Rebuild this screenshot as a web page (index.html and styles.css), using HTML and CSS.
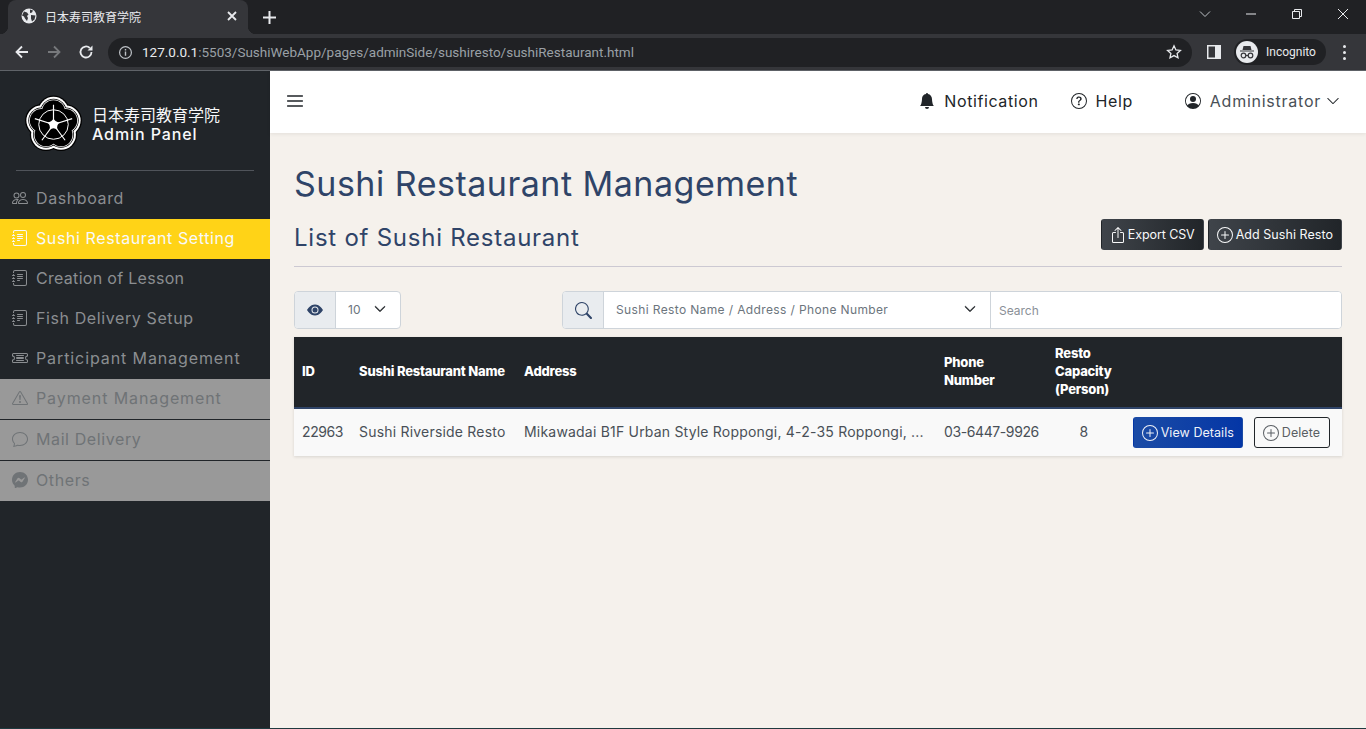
FILE: index.html
```html
<!DOCTYPE html>
<html lang="ja">
<head>
    <meta charset="UTF-8">
    <title>日本寿司教育学院</title>
    <link rel="stylesheet" href="styles.css">
</head>
<body>
    <svg class="icon-defs" xmlns="http://www.w3.org/2000/svg">
        <symbol id="i-people" viewBox="0 0 16 16"><path d="M15 14s1 0 1-1-1-4-5-4-5 3-5 4 1 1 1 1h8zm-7.978-1A.261.261 0 0 1 7 12.996c.001-.264.167-1.03.76-1.72C8.312 10.629 9.282 10 11 10c1.717 0 2.687.63 3.24 1.276.593.69.758 1.457.76 1.72l-.008.002a.274.274 0 0 1-.014.002H7.022zM11 7a2 2 0 1 0 0-4 2 2 0 0 0 0 4zm3-2a3 3 0 1 1-6 0 3 3 0 0 1 6 0zM6.936 9.28a5.88 5.88 0 0 0-1.23-.247A7.35 7.35 0 0 0 5 9c-4 0-5 3-5 4 0 .667.333 1 1 1h4.216A2.238 2.238 0 0 1 5 13c0-1.01.377-2.042 1.09-2.904.243-.294.526-.569.846-.816zM4.92 10A5.493 5.493 0 0 0 4 13H1c0-.26.164-1.03.76-1.724.545-.636 1.492-1.256 3.16-1.275zM1.5 5.5a3 3 0 1 1 6 0 3 3 0 0 1-6 0zm3-2a2 2 0 1 0 0 4 2 2 0 0 0 0-4z"/></symbol>
        <symbol id="i-journal" viewBox="0 0 16 16"><path d="M5 10.5a.5.5 0 0 1 .5-.5h2a.5.5 0 0 1 0 1h-2a.5.5 0 0 1-.5-.5zm0-2a.5.5 0 0 1 .5-.5h5a.5.5 0 0 1 0 1h-5a.5.5 0 0 1-.5-.5zm0-2a.5.5 0 0 1 .5-.5h5a.5.5 0 0 1 0 1h-5a.5.5 0 0 1-.5-.5zm0-2a.5.5 0 0 1 .5-.5h5a.5.5 0 0 1 0 1h-5a.5.5 0 0 1-.5-.5z"/><path d="M3 0h10a2 2 0 0 1 2 2v12a2 2 0 0 1-2 2H3a2 2 0 0 1-2-2v-1h1v1a1 1 0 0 0 1 1h10a1 1 0 0 0 1-1V2a1 1 0 0 0-1-1H3a1 1 0 0 0-1 1v1H1V2a2 2 0 0 1 2-2z"/><path d="M1 5v-.5a.5.5 0 0 1 1 0V5h.5a.5.5 0 0 1 0 1h-2a.5.5 0 0 1 0-1H1zm0 3v-.5a.5.5 0 0 1 1 0V8h.5a.5.5 0 0 1 0 1h-2a.5.5 0 0 1 0-1H1zm0 3v-.5a.5.5 0 0 1 1 0v.5h.5a.5.5 0 0 1 0 1h-2a.5.5 0 0 1 0-1H1z"/></symbol>
        <symbol id="i-ticket" viewBox="0 0 16 16"><path d="M4 5.5a.5.5 0 0 1 .5-.5h7a.5.5 0 0 1 0 1h-7a.5.5 0 0 1-.5-.5Zm0 5a.5.5 0 0 1 .5-.5h7a.5.5 0 0 1 0 1h-7a.5.5 0 0 1-.5-.5ZM5 7a1 1 0 0 0 0 2h6a1 1 0 1 0 0-2H5Z"/><path d="M0 4.5A1.5 1.5 0 0 1 1.5 3h13A1.5 1.5 0 0 1 16 4.5V6a.5.5 0 0 1-.5.5 1.5 1.5 0 0 0 0 3 .5.5 0 0 1 .5.5v1.5a1.5 1.5 0 0 1-1.5 1.5h-13A1.5 1.5 0 0 1 0 11.5V10a.5.5 0 0 1 .5-.5 1.5 1.5 0 1 0 0-3A.5.5 0 0 1 0 6V4.5ZM1.5 4a.5.5 0 0 0-.5.5v1.05a2.5 2.5 0 0 1 0 4.9v1.05a.5.5 0 0 0 .5.5h13a.5.5 0 0 0 .5-.5v-1.05a2.5 2.5 0 0 1 0-4.9V4.5a.5.5 0 0 0-.5-.5h-13Z"/></symbol>
        <symbol id="i-warning" viewBox="0 0 16 16"><path d="M7.938 2.016A.13.13 0 0 1 8.002 2a.13.13 0 0 1 .063.016.146.146 0 0 1 .054.057l6.857 11.667c.036.06.035.124.002.183a.163.163 0 0 1-.054.06.116.116 0 0 1-.066.017H1.146a.115.115 0 0 1-.066-.017.163.163 0 0 1-.054-.06.176.176 0 0 1 .002-.183L7.884 2.073a.147.147 0 0 1 .054-.057zm1.044-.45a1.13 1.13 0 0 0-1.96 0L.165 13.233c-.457.778.091 1.767.98 1.767h13.713c.889 0 1.438-.99.98-1.767L8.982 1.566z"/><path d="M7.002 12a1 1 0 1 1 2 0 1 1 0 0 1-2 0zM7.1 5.995a.905.905 0 1 1 1.8 0l-.35 3.507a.552.552 0 0 1-1.1 0L7.1 5.995z"/></symbol>
        <symbol id="i-chat" viewBox="0 0 16 16"><path d="M2.678 11.894a1 1 0 0 1 .287.801 10.97 10.97 0 0 1-.398 2c1.395-.323 2.247-.697 2.634-.893a1 1 0 0 1 .71-.074A8.06 8.06 0 0 0 8 14c3.996 0 7-2.807 7-6 0-3.192-3.004-6-7-6S1 4.808 1 8c0 1.468.617 2.83 1.678 3.894zm-.493 3.905a21.682 21.682 0 0 1-.713.129c-.2.032-.352-.176-.273-.362a9.68 9.68 0 0 0 .244-.637l.003-.01c.248-.72.45-1.548.524-2.319C.743 11.37 0 9.76 0 8c0-3.866 3.582-7 8-7s8 3.134 8 7-3.582 7-8 7a9.06 9.06 0 0 1-2.347-.306c-.52.263-1.639.742-3.468 1.105z"/></symbol>
        <symbol id="i-messenger" viewBox="0 0 16 16"><path d="M0 7.76C0 3.301 3.493 0 8 0s8 3.301 8 7.76-3.493 7.76-8 7.76c-.81 0-1.586-.107-2.316-.307a.639.639 0 0 0-.427.03l-1.588.702a.64.64 0 0 1-.898-.566l-.044-1.423a.639.639 0 0 0-.215-.456C.956 12.108 0 10.092 0 7.76zm5.546-1.459-2.35 3.728c-.225.358.214.761.551.506l2.525-1.916a.48.48 0 0 1 .578-.002l1.869 1.402a1.2 1.2 0 0 0 1.735-.32l2.35-3.728c.226-.358-.214-.761-.551-.506L9.728 7.381a.48.48 0 0 1-.578.002L7.281 5.98a1.2 1.2 0 0 0-1.735.32z"/></symbol>
        <symbol id="i-plus" viewBox="0 0 16 16"><path d="M8 15A7 7 0 1 1 8 1a7 7 0 0 1 0 14zm0 1A8 8 0 1 0 8 0a8 8 0 0 0 0 16z"/><path d="M8 4a.5.5 0 0 1 .5.5v3h3a.5.5 0 0 1 0 1h-3v3a.5.5 0 0 1-1 0v-3h-3a.5.5 0 0 1 0-1h3v-3A.5.5 0 0 1 8 4z"/></symbol>
        <symbol id="i-export" viewBox="0 0 16 16"><path d="M3.500 6a.5.5 0 0 0-.5.5v8a.5.5 0 0 0 .5.5h9a.5.5 0 0 0 .5-.5v-8a.5.5 0 0 0-.5-.5h-2a.5.5 0 0 1 0-1h2A1.500 1.500 0 0 1 14 6.500v8a1.500 1.500 0 0 1-1.500 1.500h-9A1.500 1.500 0 0 1 2 14.500v-8A1.500 1.500 0 0 1 3.500 5h2a.5.5 0 0 1 0 1h-2z"/><path d="M7.646.146a.5.5 0 0 1 .708 0l3 3a.5.5 0 0 1-.708.708L8.500 1.707V10.500a.5.5 0 0 1-1 0V1.707L5.354 3.854a.5.5 0 1 1-.708-.708l3-3z"/></symbol>
        <symbol id="i-chevron" viewBox="0 0 16 16"><path fill-rule="evenodd" d="M1.646 4.646a.5.5 0 0 1 .708 0L8 10.293l5.646-5.647a.5.5 0 0 1 .708.708l-6 6a.5.5 0 0 1-.708 0l-6-6a.5.5 0 0 1 0-.708z"/></symbol>
        <!-- five overlapping lobes of the logo, drawn again at each layer with a different radius -->
        <symbol id="i-lobes-17" viewBox="0 0 60 60"><circle cx="30" cy="17" r="16.500"/><circle cx="42.400" cy="26" r="16.500"/><circle cx="37.600" cy="40.500" r="16.500"/><circle cx="22.400" cy="40.500" r="16.500"/><circle cx="17.600" cy="26" r="16.500"/></symbol>
        <symbol id="i-lobes-15" viewBox="0 0 60 60"><circle cx="30" cy="17" r="15.200"/><circle cx="42.400" cy="26" r="15.200"/><circle cx="37.600" cy="40.500" r="15.200"/><circle cx="22.400" cy="40.500" r="15.200"/><circle cx="17.600" cy="26" r="15.200"/></symbol>
        <symbol id="i-lobes-13" viewBox="0 0 60 60"><circle cx="30" cy="17" r="13.200"/><circle cx="42.400" cy="26" r="13.200"/><circle cx="37.600" cy="40.500" r="13.200"/><circle cx="22.400" cy="40.500" r="13.200"/><circle cx="17.600" cy="26" r="13.200"/></symbol>
        <symbol id="i-lobes-12" viewBox="0 0 60 60"><circle cx="30" cy="17" r="12.500"/><circle cx="42.400" cy="26" r="12.500"/><circle cx="37.600" cy="40.500" r="12.500"/><circle cx="22.400" cy="40.500" r="12.500"/><circle cx="17.600" cy="26" r="12.500"/></symbol>
        <symbol id="i-lobes-11" viewBox="0 0 60 60"><circle cx="30" cy="17" r="11.700"/><circle cx="42.400" cy="26" r="11.700"/><circle cx="37.600" cy="40.500" r="11.700"/><circle cx="22.400" cy="40.500" r="11.700"/><circle cx="17.600" cy="26" r="11.700"/></symbol>
    </svg>

    <!-- browser window top -->
    <div class="tabstrip">
        <div class="tab">
            <svg class="favicon" viewBox="0 0 16 16"><circle cx="8" cy="8" r="7.5" fill="#e8eaed"/><path d="M3 3.500l3 1 1.500 2-1.500 1.500 1 2-1 3-2-2.500-1-2-2-1zM9 1.500l3 1-1 2-2 .5zM10 7l4.500 .5-1 4-2.500 2-1-3z" fill="#35363a"/></svg>
            <span class="tab-title">日本寿司教育学院</span>
            <svg class="tab-close" viewBox="0 0 10 10"><path d="M1 1l8 8M9 1L1 9" stroke="#e8eaed" stroke-width="1.800"/></svg>
        </div>
        <svg class="new-tab" viewBox="0 0 13 13"><path d="M6.500 0v13M0 6.500h13" stroke="#e8eaed" stroke-width="2"/></svg>
        <div class="window-btns">
            <svg class="win-chevron" viewBox="0 0 12 8"><path d="M1 1.500l5 5 5-5" fill="none" stroke="#bdc1c6" stroke-width="1"/></svg>
            <svg class="win-btn" viewBox="0 0 12 12"><path d="M1 6h10" stroke="#e8eaed" stroke-width="1"/></svg>
            <svg class="win-btn" viewBox="0 0 12 12"><path d="M1.500 3.500h7v7h-7zM3.500 3.500v-2h7v7h-2" fill="none" stroke="#e8eaed" stroke-width="1"/></svg>
            <svg class="win-btn" viewBox="0 0 12 12"><path d="M1 1l10 10M11 1L1 11" stroke="#e8eaed" stroke-width="1"/></svg>
        </div>
    </div>
    <div class="toolbar">
        <svg class="nav-icon" viewBox="0 0 16 16"><path d="M14 8H3M8 2.500L2.500 8 8 13.500" fill="none" stroke="#e8eaed" stroke-width="1.800"/></svg>
        <svg class="nav-icon" viewBox="0 0 16 16"><path d="M2 8h11M8 2.500L13.500 8 8 13.500" fill="none" stroke="#77797c" stroke-width="1.800"/></svg>
        <svg class="nav-icon" viewBox="0 0 16 16"><path d="M13.500 8A5.500 5.500 0 1 1 11.800 4" fill="none" stroke="#e8eaed" stroke-width="1.800"/><path d="M9.500 6.500H14.500V1.500z" fill="#e8eaed"/></svg>
        <div class="omnibox">
            <svg class="info-icon" viewBox="0 0 16 16"><circle cx="8" cy="8" r="6.300" fill="none" stroke="#bdc1c6" stroke-width="1.300"/><path d="M8 7v4.500M8 4.300v1.500" stroke="#bdc1c6" stroke-width="1.500"/></svg>
            <span class="url"><b>127.0.0.1</b>:5503/SushiWebApp/pages/adminSide/sushiresto/sushiRestaurant.html</span>
            <svg class="star-icon" viewBox="0 0 16 16"><path d="M8 1.800l1.900 4.100 4.500.5-3.300 3 .9 4.400L8 11.600l-4 2.200.9-4.400-3.300-3 4.500-.5z" fill="none" stroke="#e8eaed" stroke-width="1.300"/></svg>
        </div>
        <svg class="side-icon" viewBox="0 0 14 14"><rect width="14" height="14" fill="#e8eaed"/><rect x="1.500" y="1.500" width="6.500" height="11" fill="#35363a"/></svg>
        <div class="incognito">
            <svg class="incognito-badge" viewBox="0 0 22 22"><circle cx="11" cy="11" r="11" fill="#e8eaed"/><path d="M7.500 5h7l1 4h-9zM4 9.500h14v1H4z" fill="#35363a"/><circle cx="7.500" cy="14.500" r="2.300" fill="none" stroke="#35363a" stroke-width="1.200"/><circle cx="14.500" cy="14.500" r="2.300" fill="none" stroke="#35363a" stroke-width="1.200"/><path d="M9.800 14.500h2.400" stroke="#35363a" stroke-width="1.200"/></svg>
            <span>Incognito</span>
        </div>
        <div class="kebab"><i></i><i></i><i></i></div>
    </div>

    <div class="app">
        <aside class="sidebar">
            <div class="brand">
                <svg class="brand-logo" viewBox="0 0 60 60">
                    <use href="#i-lobes-17" fill="#000"/>
                    <use href="#i-lobes-15" fill="#fff"/>
                    <use href="#i-lobes-13" fill="#000"/>
                    <use href="#i-lobes-12" fill="#fff"/>
                    <use href="#i-lobes-11" fill="#000"/>
                    <circle cx="30" cy="30" r="15" fill="none" stroke="#fff" stroke-width="1"/>
                    <path d="M30 30V10M30 30L49 24M30 30L41.800 46M30 30L18.200 46M30 30L11 24" stroke="#fff" stroke-width="1.200"/>
                    <path d="M30 23.500Q31 27.500 36.500 27.900 32.700 30.300 34 35.300 30 32.200 26 35.300 27.300 30.300 23.500 27.900 29 27.500 30 23.500z" fill="#fff"/>
                </svg>
                <div class="brand-text">
                    <div class="brand-jp">日本寿司教育学院</div>
                    <div class="brand-sub">Admin Panel</div>
                </div>
            </div>
            <hr class="brand-rule">
            <nav class="side-nav">
                <a class="side-link"><svg class="bi"><use href="#i-people"/></svg>Dashboard</a>
                <a class="side-link active"><svg class="bi"><use href="#i-journal"/></svg>Sushi Restaurant Setting</a>
                <a class="side-link tight"><svg class="bi"><use href="#i-journal"/></svg>Creation of Lesson</a>
                <a class="side-link"><svg class="bi"><use href="#i-journal"/></svg>Fish Delivery Setup</a>
                <a class="side-link wide"><svg class="bi"><use href="#i-ticket"/></svg>Participant Management</a>
                <a class="side-link disabled wide"><svg class="bi"><use href="#i-warning"/></svg>Payment Management</a>
                <a class="side-link disabled"><svg class="bi"><use href="#i-chat"/></svg>Mail Delivery</a>
                <a class="side-link disabled"><svg class="bi"><use href="#i-messenger"/></svg>Others</a>
            </nav>
        </aside>

        <div class="content">
            <header class="topbar">
                <svg class="menu-icon" viewBox="0 0 16 16"><path d="M1 3.500h14M1 8h14M1 12.500h14" stroke="#212529" stroke-width="1.300"/></svg>
                <div class="top-links">
                    <a class="top-link notif"><svg class="top-icon" viewBox="0 0 16 16"><path d="M8 16a2 2 0 0 0 2-2H6a2 2 0 0 0 2 2zm.995-14.901a1 1 0 1 0-1.990 0A5.002 5.002 0 0 0 3 6c0 1.098-.5 6-2 7h14c-1.500-1-2-5.902-2-7 0-2.420-1.720-4.440-4.005-4.901z"/></svg>Notification</a>
                    <a class="top-link help"><svg class="top-icon" viewBox="0 0 16 16"><path d="M8 15A7 7 0 1 1 8 1a7 7 0 0 1 0 14zm0 1A8 8 0 1 0 8 0a8 8 0 0 0 0 16z"/><path d="M5.255 5.786a.237.237 0 0 0 .241.247h.825c.138 0 .248-.113.266-.25.09-.656.54-1.134 1.342-1.134.686 0 1.314.343 1.314 1.168 0 .635-.374.927-.965 1.371-.673.489-1.206 1.060-1.168 1.987l.003.217a.25.25 0 0 0 .25.246h.811a.25.25 0 0 0 .25-.25v-.105c0-.718.273-.927 1.010-1.486.609-.463 1.244-.977 1.244-2.056 0-1.511-1.276-2.241-2.673-2.241-1.267 0-2.655.59-2.750 2.286zm1.557 5.763c0 .533.425.927 1.010.927.609 0 1.028-.394 1.028-.927 0-.552-.42-.94-1.029-.94-.584 0-1.009.388-1.009.94z"/></svg>Help</a>
                    <a class="top-link user"><svg class="top-icon" viewBox="0 0 16 16"><path d="M11 6a3 3 0 1 1-6 0 3 3 0 0 1 6 0z"/><path fill-rule="evenodd" d="M0 8a8 8 0 1 1 16 0A8 8 0 0 1 0 8zm8-7a7 7 0 0 0-5.468 11.370C3.242 11.226 4.805 10 8 10s4.757 1.225 5.468 2.370A7 7 0 0 0 8 1z"/></svg>Administrator<svg class="user-chevron"><use href="#i-chevron"/></svg></a>
                </div>
            </header>

            <main class="page">
                <h1 class="page-title">Sushi Restaurant Management</h1>
                <div class="section-head">
                    <h2 class="section-title">List of Sushi Restaurant</h2>
                    <div class="section-actions">
                        <button class="btn btn-dark btn-export"><svg class="bi"><use href="#i-export"/></svg>Export CSV</button>
                        <button class="btn btn-dark"><svg class="bi"><use href="#i-plus"/></svg>Add Sushi Resto</button>
                    </div>
                </div>

                <div class="filters">
                    <div class="input-group per-page">
                        <span class="addon"><svg class="eye-icon" viewBox="0 0 16 16"><path d="M10.500 8a2.500 2.500 0 1 1-5 0 2.500 2.500 0 0 1 5 0z"/><path d="M0 8s3-5.500 8-5.500S16 8 16 8s-3 5.500-8 5.500S0 8 0 8zm8 3.500a3.500 3.500 0 1 0 0-7 3.500 3.500 0 0 0 0 7z"/></svg></span>
                        <span class="select select-size">10<svg class="select-chevron"><use href="#i-chevron"/></svg></span>
                    </div>
                    <div class="input-group search-group">
                        <span class="addon"><svg class="search-icon" viewBox="0 0 16 16"><path d="M11.742 10.344a6.500 6.500 0 1 0-1.397 1.398h-.001c.03.04.062.078.098.115l3.850 3.850a1 1 0 0 0 1.415-1.414l-3.850-3.850a1.007 1.007 0 0 0-.115-.1zM12 6.500a5.500 5.500 0 1 1-11 0 5.500 5.500 0 0 1 11 0z"/></svg></span>
                        <span class="select select-field">Sushi Resto Name / Address / Phone Number<svg class="select-chevron"><use href="#i-chevron"/></svg></span>
                        <input class="search-input" type="text" placeholder="Search">
                    </div>
                </div>

                <table class="resto-table">
                    <colgroup>
                        <col class="col-id"><col class="col-name"><col class="col-address"><col class="col-phone"><col class="col-cap"><col>
                    </colgroup>
                    <thead>
                        <tr>
                            <th>ID</th>
                            <th>Sushi Restaurant Name</th>
                            <th>Address</th>
                            <th>Phone<br>Number</th>
                            <th>Resto Capacity (Person)</th>
                            <th></th>
                        </tr>
                    </thead>
                    <tbody>
                        <tr>
                            <td class="num">22963</td>
                            <td>Sushi Riverside Resto</td>
                            <td>Mikawadai B1F Urban Style Roppongi, 4-2-35 Roppongi, ...</td>
                            <td class="num">03-6447-9926</td>
                            <td class="capacity">8</td>
                            <td class="actions">
                                <button class="btn btn-blue"><svg class="bi"><use href="#i-plus"/></svg>View Details</button>
                                <button class="btn btn-outline"><svg class="bi"><use href="#i-plus"/></svg>Delete</button>
                            </td>
                        </tr>
                    </tbody>
                </table>
            </main>
        </div>
    </div>
    <div class="bottom-line"></div>
</body>
</html>
```

FILE: styles.css
```css
/* Base */
* {
    box-sizing: border-box;
}

html, body {
    margin: 0;
    height: 729px;
    overflow: hidden;
}

body {
    font-family: Inter, "Noto Sans CJK JP", sans-serif;
    background-color: #f5f1ec;
    color: #212529;
}

.icon-defs {
    display: none;
}

.bi {
    width: 16px;
    height: 16px;
    fill: currentColor;
    flex-shrink: 0;
}

/* Browser top */
.tabstrip {
    height: 34px;
    background-color: #202124;
    display: flex;
    align-items: flex-end;
    padding-left: 8px;
}

.tab {
    position: relative;
    width: 240px;
    height: 34px;
    background-color: #35363a;
    border-radius: 8px 8px 0 0;
    display: flex;
    align-items: center;
    padding: 0 11px 2px 13px;
    color: #e8eaed;
}

/* little flares at the foot of the tab */
.tab::before,
.tab::after {
    content: "";
    position: absolute;
    bottom: 0;
    width: 8px;
    height: 8px;
}

.tab::before {
    left: -8px;
    background-image: radial-gradient(circle at 0 0, #202124 8px, #35363a 8.5px);
}

.tab::after {
    right: -8px;
    background-image: radial-gradient(circle at 100% 0, #202124 8px, #35363a 8.5px);
}

.favicon {
    width: 16px;
    height: 16px;
    margin-right: 8px;
}

.tab-title {
    font-size: 12px;
    flex: 1;
    font-family: "Noto Sans CJK JP", sans-serif;
}

.tab-close {
    width: 10px;
    height: 10px;
}

.new-tab {
    width: 13px;
    height: 13px;
    margin: 0 0 10px 15px;
}

.window-btns {
    margin-left: auto;
    display: flex;
    align-items: center;
    align-self: flex-start;
    height: 28px;
}

.win-chevron {
    width: 12px;
    height: 8px;
    margin-right: 34px;
}

.win-btn {
    width: 12px;
    height: 12px;
    margin-right: 34px;
}

.window-btns .win-btn:last-child {
    margin-right: 17px;
}

.toolbar {
    height: 37px;
    background-color: #35363a;
    border-bottom: 1px solid #5f6368;
    display: flex;
    align-items: center;
    padding-left: 14px;
}

.nav-icon {
    width: 16px;
    height: 16px;
    margin-right: 16px;
}

.omnibox {
    width: 1084px;
    height: 29px;
    margin-left: -2px;
    border-radius: 15px;
    background-color: #202124;
    display: flex;
    align-items: center;
    padding: 0 10px;
}

.info-icon {
    width: 15px;
    height: 15px;
    margin-right: 9px;
}

.url {
    font-family: Roboto, sans-serif;
    font-size: 13.5px;
    color: #9aa0a6;
    flex: 1;
}

.url b {
    color: #e8eaed;
    font-weight: 400;
}

.star-icon {
    width: 16px;
    height: 16px;
}

.side-icon {
    width: 14px;
    height: 14px;
    margin: 0 13px 0 15px;
}

.incognito {
    width: 92px;
    height: 26px;
    border-radius: 13px;
    background-color: #202124;
    display: flex;
    align-items: center;
    padding-left: 2px;
    color: #e8eaed;
    font-family: Roboto, sans-serif;
    font-size: 12px;
}

.incognito-badge {
    width: 22px;
    height: 22px;
    margin-right: 8px;
}

.kebab {
    margin-left: 17px;
    display: flex;
    flex-direction: column;
    gap: 3px;
}

.kebab i {
    display: block;
    width: 3px;
    height: 3px;
    border-radius: 50%;
    background-color: #e8eaed;
}

/* App */
.app {
    display: flex;
    height: 657px;
}

.bottom-line {
    height: 1px;
    background-color: #1f3a3f;
}

.sidebar {
    width: 270px;
    flex-shrink: 0;
    background-color: #212529;
}

.brand {
    height: 99px;
    display: flex;
    align-items: center;
    padding: 7px 0 0 24px;
    color: #f8f9fa;
}

.brand-logo {
    width: 59px;
    height: 59px;
    margin-right: 9px;
}

.brand-text {
    margin-top: 2px;
}

.brand-jp {
    font-size: 16px;
    line-height: 17px;
    font-family: "Noto Sans CJK JP", sans-serif;
}

.brand-sub {
    font-size: 16px;
    line-height: 22px;
    font-weight: 500;
    letter-spacing: 0.9px;
}

.brand-rule {
    margin: 0 16px;
    border: 0;
    border-top: 1px solid #50545a;
}

.side-nav {
    margin-top: 8px;
}

.side-link {
    height: 40px;
    display: flex;
    align-items: center;
    padding: 0 0 2px 12px;
    gap: 8px;
    font-size: 16px;
    color: #8b8e91;
    letter-spacing: 0.6px;
}

.side-link.wide {
    letter-spacing: 0.9px;
}

.side-link.tight {
    letter-spacing: 0.3px;
}

.side-link.active {
    background-color: #ffd317;
    color: #f8f9fa;
}

.side-link.disabled {
    height: 41px;
    background-color: #999;
    border-bottom: 1px solid #212529;
    color: #6f7376;
}

.side-link.disabled:last-child {
    height: 40px;
    border-bottom: 0;
}

/* Top bar */
.content {
    flex: 1;
    min-width: 0;
}

.topbar {
    height: 62px;
    background-color: #fff;
    box-shadow: 0 1px 4px rgba(0, 0, 0, 0.08);
    display: flex;
    align-items: center;
    justify-content: space-between;
    padding: 0 26px 2px 16px;
}

.menu-icon {
    width: 18px;
    height: 18px;
}

.top-links {
    display: flex;
    align-items: center;
}

.top-link {
    display: flex;
    align-items: center;
    font-size: 16px;
    letter-spacing: 0.6px;
    color: #212529;
}

.top-icon {
    width: 16px;
    height: 16px;
    margin-right: 9px;
    fill: currentColor;
}

.help {
    margin-left: 32px;
}

.user {
    margin-left: 52px;
    color: #495057;
    letter-spacing: 0.75px;
}

.user .top-icon {
    fill: #212529;
}

.user-chevron {
    width: 14px;
    height: 14px;
    margin-left: 5px;
    fill: #212529;
}

/* Page */
.page {
    padding: 31px 24px 0;
}

.page-title {
    margin: 0;
    font-size: 34px;
    line-height: 40px;
    font-weight: 400;
    color: #2f4468;
    letter-spacing: 0.5px;
}

.section-head {
    display: flex;
    align-items: center;
    justify-content: space-between;
    height: 54px;
    margin-top: 9px;
    padding: 4px 0 14px;
    border-bottom: 1px solid #ccc9d2;
}

.section-title {
    margin: 5px 0 0;
    font-size: 24px;
    font-weight: 400;
    color: #2f4468;
    letter-spacing: 0.75px;
}

.section-actions {
    display: flex;
    gap: 4px;
}

.btn {
    height: 31px;
    display: inline-flex;
    align-items: center;
    gap: 3px;
    border-radius: 3px;
    font-family: inherit;
    font-size: 12.5px;
    letter-spacing: 0.05px;
    padding: 0 8px;
    border: 1px solid transparent;
}

.btn-dark {
    background-image: linear-gradient(to right, #3f444a, #212529);
    color: #f8f9fa;
}

.btn-export {
    gap: 2px;
    letter-spacing: -0.1px;
}

.btn-blue {
    background-image: linear-gradient(to right, #1b4ba5, #0436a6);
    color: #f0f2f8;
}

.btn-outline {
    background-color: transparent;
    border-color: #212529;
    color: #5a5f64;
    margin-left: 7px;
    padding-right: 9px;
}

/* Filter row */
.filters {
    display: flex;
    justify-content: space-between;
    margin-top: 24px;
}

.input-group {
    height: 38px;
    display: flex;
    border: 1px solid #ced4da;
    border-radius: 4px;
    background-color: #fff;
    overflow: hidden;
}

.per-page {
    width: 107px;
}

.search-group {
    width: 780px;
}

.addon {
    width: 41px;
    flex-shrink: 0;
    background-color: #e9ecef;
    border-right: 1px solid #ced4da;
    display: flex;
    align-items: center;
    justify-content: center;
}

.eye-icon {
    width: 16px;
    height: 16px;
    fill: #2f4468;
}

.search-icon {
    width: 17px;
    height: 17px;
    fill: #2f4468;
}

.select {
    display: flex;
    align-items: center;
    justify-content: space-between;
    font-size: 12px;
    color: #6c757d;
    padding: 0 14px 2px 12px;
}

.select-size {
    flex: 1;
}

.select-field {
    width: 387px;
    border-right: 1px solid #ced4da;
    letter-spacing: 0.37px;
}

.select-chevron {
    width: 12px;
    height: 12px;
    fill: #212529;
    stroke: #212529;
    stroke-width: 1px;
}

.search-input {
    flex: 1;
    border: 0;
    outline: 0;
    padding: 0 8px;
    font-family: inherit;
    font-size: 12px;
}

.search-input::placeholder {
    color: #8a9097;
}

/* Table */
.resto-table {
    width: 100%;
    margin-top: 8px;
    border-collapse: collapse;
    table-layout: fixed;
    background-color: #f9f9f9;
    box-shadow: 0 1px 3px rgba(0, 0, 0, 0.12);
}

.col-id {
    width: 57px;
}

.col-name {
    width: 165px;
}

.col-address {
    width: 420px;
}

.col-phone {
    width: 111px;
}

.col-cap {
    width: 78px;
}

.resto-table th {
    height: 71px;
    padding: 0 8px 3px;
    background-color: #212529;
    border-bottom: 2px solid #2f4468;
    color: #fff;
    text-align: left;
    font-size: 13px;
    line-height: 18px;
    font-weight: 800;
    letter-spacing: -0.2px;
}

.resto-table td {
    height: 48px;
    padding: 0 8px 2px;
    font-size: 14px;
    color: #495057;
    white-space: nowrap;
    letter-spacing: 0.2px;
}

.resto-table td.num {
    letter-spacing: -0.4px;
}

.resto-table .capacity {
    text-align: center;
    padding-right: 12px;
}

.resto-table .actions {
    text-align: right;
    padding: 0 12px 0 0;
    letter-spacing: 0;
}
```
